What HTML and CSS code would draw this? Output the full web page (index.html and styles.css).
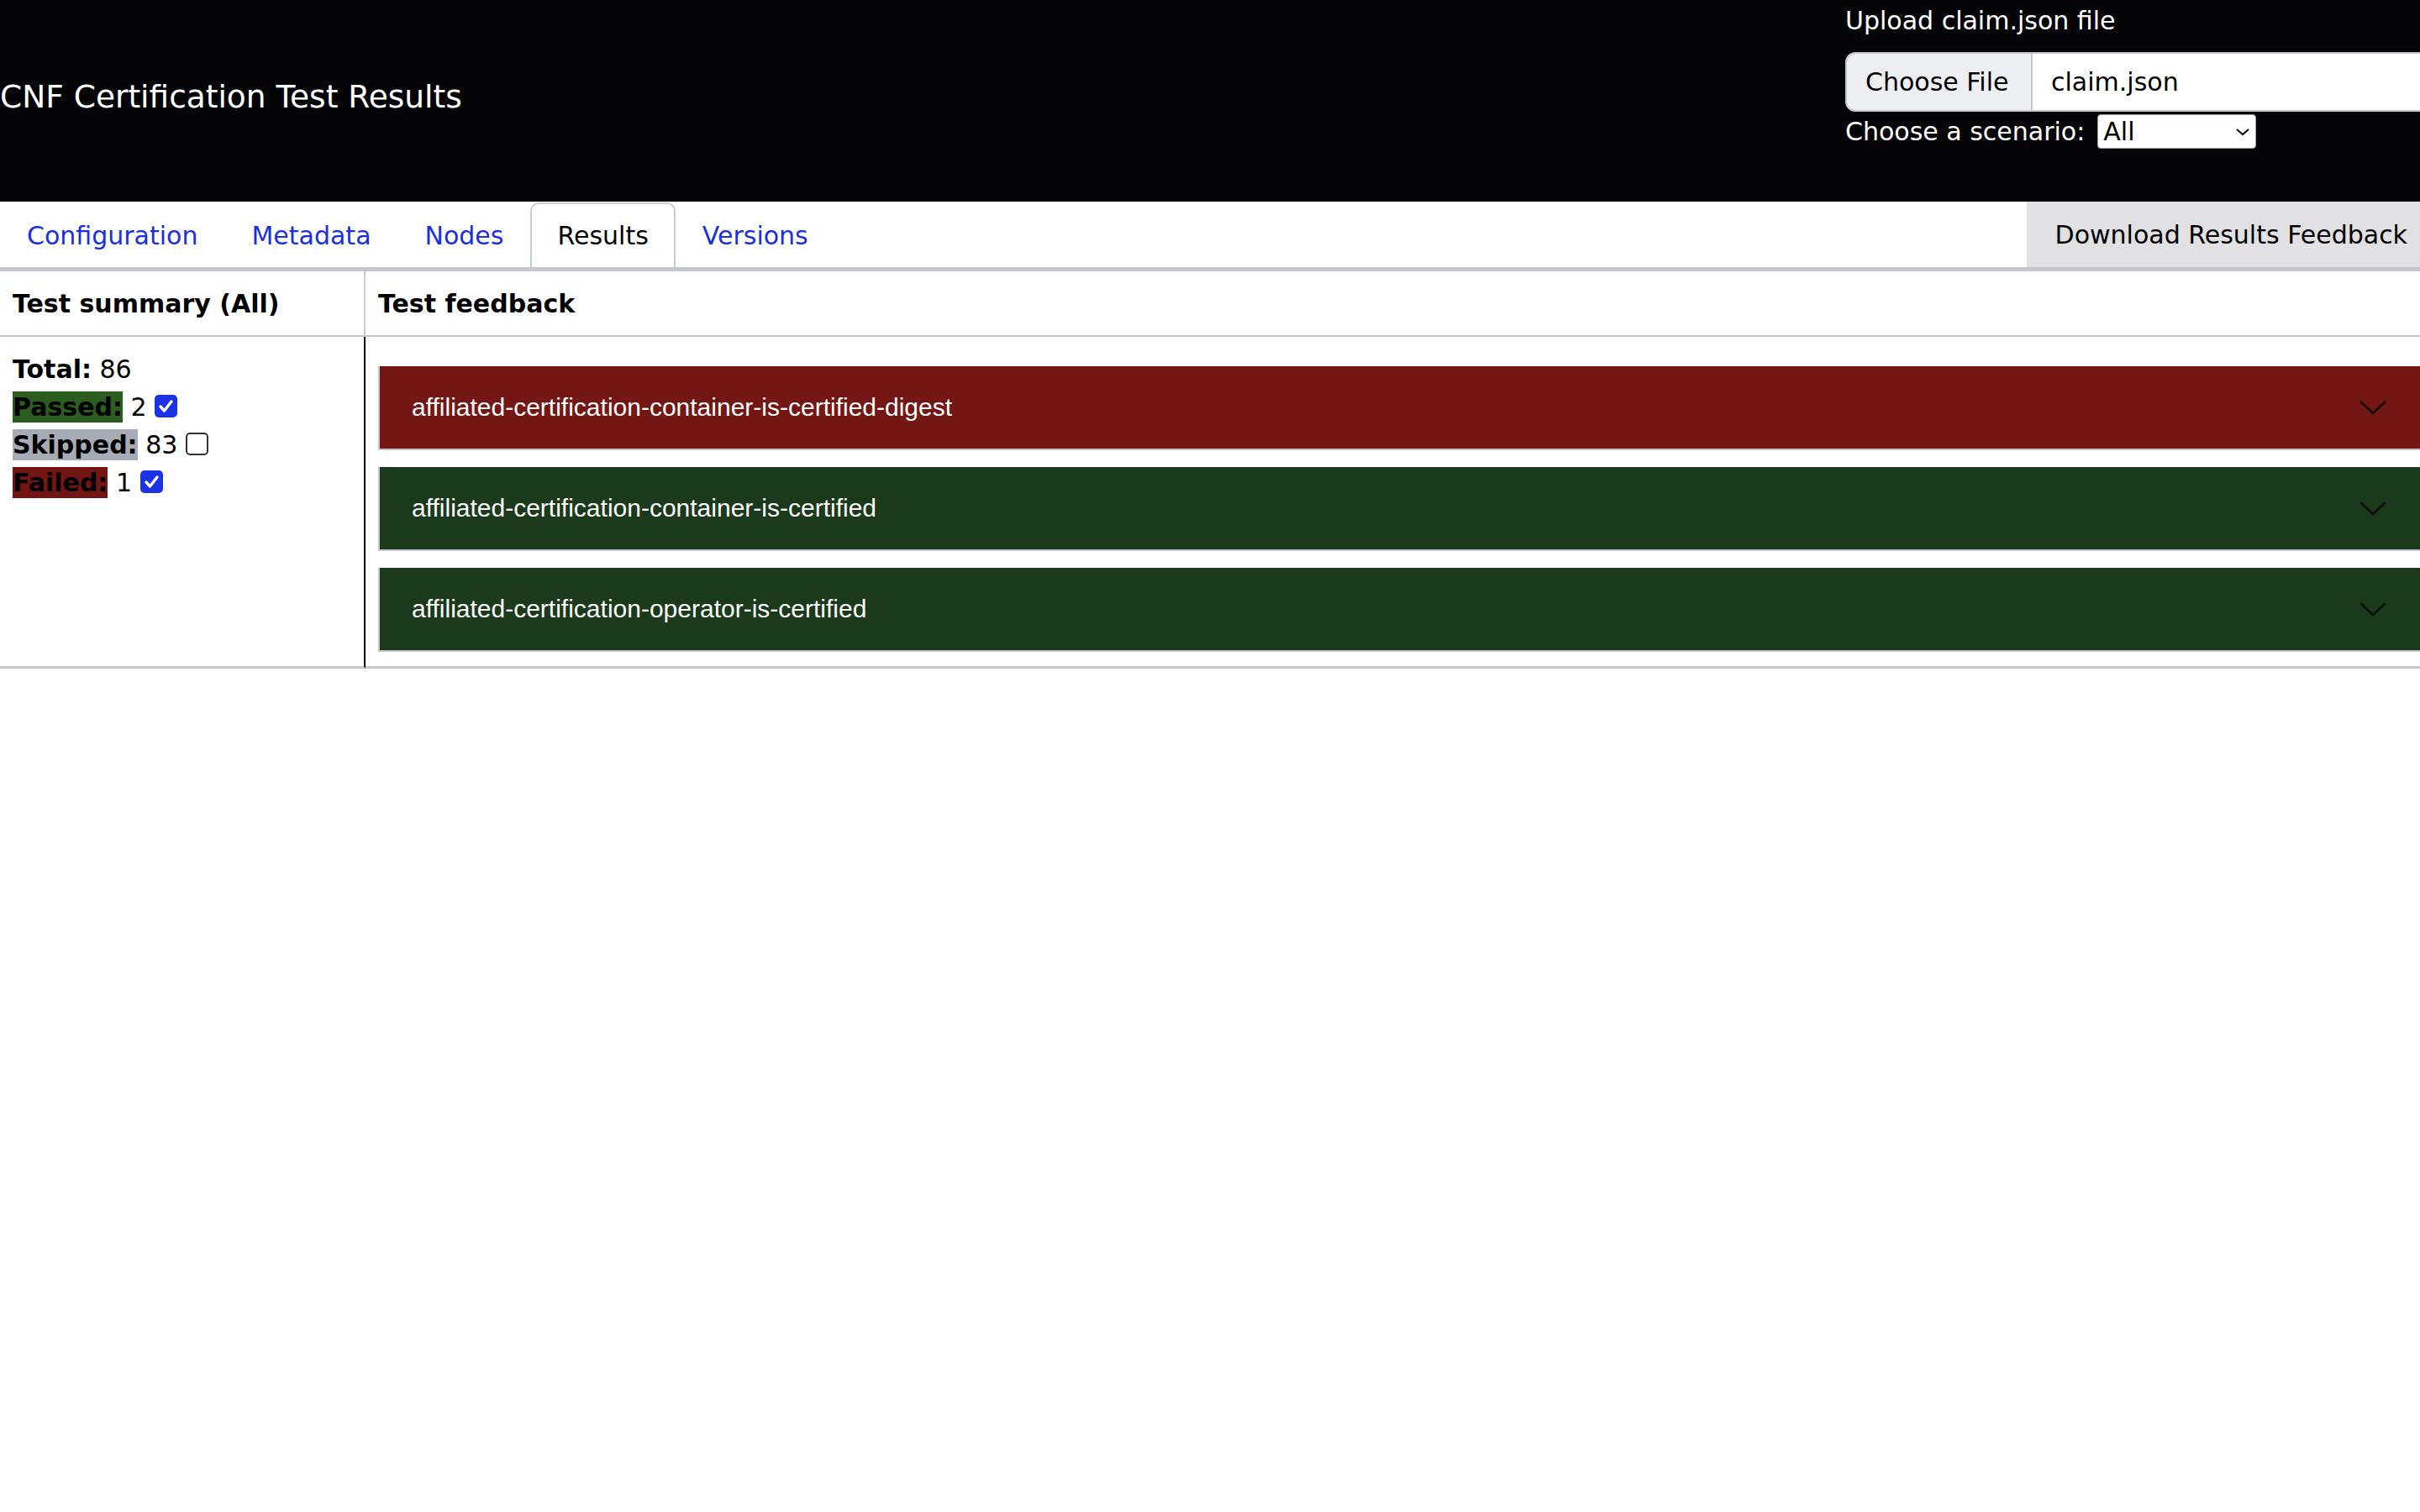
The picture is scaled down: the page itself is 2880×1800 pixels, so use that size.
FILE: index.html
```html
<!DOCTYPE html>
<html lang="en">
<head>
<meta charset="utf-8">
<title>CNF Certification Test Results</title>
<link rel="stylesheet" href="styles.css">
</head>
<body>
<header class="top">
  <div class="title">CNF Certification Test Results</div>
  <div class="upload">
    <div class="upload-label">Upload claim.json file</div>
    <div class="file">
      <span class="file-btn">Choose File</span>
      <span class="file-name">claim.json</span>
    </div>
    <div class="scenario">
      <span>Choose a scenario:</span>
      <span class="select">All
        <svg class="select-chev" width="18" height="10" viewBox="0 0 18 10"><polyline points="2,2 9,8 16,2" fill="none" stroke="#111" stroke-width="2.2"/></svg>
      </span>
    </div>
  </div>
</header>

<nav class="tabs">
  <div class="tab-list">
    <a class="tab">Configuration</a>
    <a class="tab">Metadata</a>
    <a class="tab">Nodes</a>
    <a class="tab active">Results</a>
    <a class="tab">Versions</a>
  </div>
  <button class="download">Download Results Feedback</button>
</nav>

<section class="results">
  <div class="cell head left">Test summary (All)</div>
  <div class="cell head right">Test feedback</div>
  <div class="cell body left">
    <div><b>Total:</b> 86</div>
    <div><b class="lbl passed">Passed:</b> 2 <span class="cb checked"><svg width="27" height="27" viewBox="0 0 27 27"><polyline points="7,14 11.5,19 20,8" fill="none" stroke="#fff" stroke-width="3.4" stroke-linecap="round" stroke-linejoin="round"/></svg></span></div>
    <div><b class="lbl skipped">Skipped:</b> 83 <span class="cb"></span></div>
    <div><b class="lbl failed">Failed:</b> 1 <span class="cb checked"><svg width="27" height="27" viewBox="0 0 27 27"><polyline points="7,14 11.5,19 20,8" fill="none" stroke="#fff" stroke-width="3.4" stroke-linecap="round" stroke-linejoin="round"/></svg></span></div>
  </div>
  <div class="cell body right">
    <div class="item fail"><span class="item-text">affiliated-certification-container-is-certified-digest</span><svg class="chev" width="34" height="20" viewBox="0 0 34 20"><polyline points="2,3 17,17 32,3" fill="none" stroke="#0a0a0a" stroke-width="2.6"/></svg></div>
    <div class="item pass"><span class="item-text">affiliated-certification-container-is-certified</span><svg class="chev" width="34" height="20" viewBox="0 0 34 20"><polyline points="2,3 17,17 32,3" fill="none" stroke="#0a0a0a" stroke-width="2.6"/></svg></div>
    <div class="item pass"><span class="item-text">affiliated-certification-operator-is-certified</span><svg class="chev" width="34" height="20" viewBox="0 0 34 20"><polyline points="2,3 17,17 32,3" fill="none" stroke="#0a0a0a" stroke-width="2.6"/></svg></div>
  </div>
</section>
</body>
</html>
```

FILE: styles.css
```css
* { box-sizing: border-box; }

html, body {
  margin: 0;
  padding: 0;
  background: #ffffff;
  overflow: hidden;
}

body {
  font-family: "DejaVu Sans", Verdana, sans-serif;
  font-size: 30px;
  color: #000;
}

.top {
  display: flex;
  justify-content: space-between;
  align-items: center;
  height: 240px;
  background: #050508;
  color: #fff;
  overflow: hidden;
}

.title {
  font-size: 37.5px;
  line-height: 44px;
  padding-bottom: 10px;
  white-space: nowrap;
}

.upload {
  flex: 0 0 684px;
  width: 684px;
  min-width: 0;
  align-self: flex-start;
  padding-top: 7px;
}

.upload-label {
  line-height: 35px;
  white-space: nowrap;
}

.file {
  display: flex;
  width: 900px;
  height: 71px;
  margin-top: 20px;
  color: #000;
}

.file-btn {
  display: flex;
  align-items: center;
  width: 223px;
  padding-left: 22px;
  background: #eeeff3;
  border: 2px solid #c6c8cd;
  border-radius: 12px 0 0 12px;
  white-space: nowrap;
}

.file-name {
  display: flex;
  align-items: center;
  flex: 1;
  padding-left: 22px;
  background: #fff;
  border-top: 2px solid #c6c8cd;
  border-bottom: 2px solid #c6c8cd;
}

.scenario {
  display: flex;
  align-items: center;
  gap: 15px;
  margin-top: 3px;
  white-space: nowrap;
}

.select {
  display: flex;
  align-items: center;
  justify-content: space-between;
  width: 189px;
  height: 41px;
  padding: 0 6px 0 6px;
  background: #fff;
  color: #000;
  border: 1px solid #9a9ca2;
  border-radius: 4px;
}

.tabs {
  display: flex;
  height: 83px;
  border-bottom: 5px solid #c3c6cd;
}

.tab-list {
  display: flex;
}

.tab {
  display: flex;
  align-items: center;
  margin-top: 1px;
  padding: 0 30px;
  color: #1a2fe0;
  border: 2px solid transparent;
  border-bottom: none;
  border-radius: 10px 10px 0 0;
  white-space: nowrap;
}

.tab.active {
  color: #000;
  background: #fff;
  border-color: #c9ccd2;
}

.download {
  margin-left: auto;
  height: 78px;
  padding: 0 15px 0 34px;
  background: #e1e0e3;
  border: none;
  font-family: "DejaVu Sans", Verdana, sans-serif;
  font-size: 30px;
  color: #000;
  white-space: nowrap;
}

.results {
  display: grid;
  grid-template-columns: 435px 1fr;
}

.cell.head {
  font-weight: bold;
  line-height: 35px;
  padding: 21px 15px 20px 15px;
  border-bottom: 2px solid #c5c7cd;
}

.cell.head.left {
  border-right: 2px solid #c9cbd1;
}

.cell.body {
  border-bottom: 3px solid #c5c7cd;
}

.cell.body.left {
  padding: 16px 15px;
  line-height: 45px;
  border-right: 2px solid #000;
  white-space: nowrap;
}

.lbl {
  padding: 1px 0;
}

.lbl.passed { background: #2b5d1f; }
.lbl.skipped { background: #a7abb4; }
.lbl.failed { background: #721513; }

.cb {
  display: inline-block;
  width: 27px;
  height: 27px;
  vertical-align: middle;
  position: relative;
  top: -3px;
  border: 2px solid #333;
  border-radius: 5px;
  background: #fff;
}

.cb.checked {
  border: none;
  background: #1b33e4;
}

.cb svg {
  display: block;
}

.cell.body.right {
  padding: 35px 0 17px 15px;
}

.item {
  display: flex;
  align-items: center;
  justify-content: space-between;
  height: 100px;
  margin-bottom: 20px;
  padding: 0 39px 0 38px;
  border-left: 2px solid #c3c6cc;
  border-bottom: 2px solid #c3c6cc;
  font-family: "Liberation Sans", Arial, sans-serif;
  font-size: 30px;
  color: #fff;
}

.item:last-child {
  margin-bottom: 0;
}

.item.fail { background: #741614; }
.item.pass { background: #1b391b; }

.item-text {
  line-height: 34px;
  white-space: nowrap;
}

.chev {
  display: block;
  opacity: 0.9;
}
```
